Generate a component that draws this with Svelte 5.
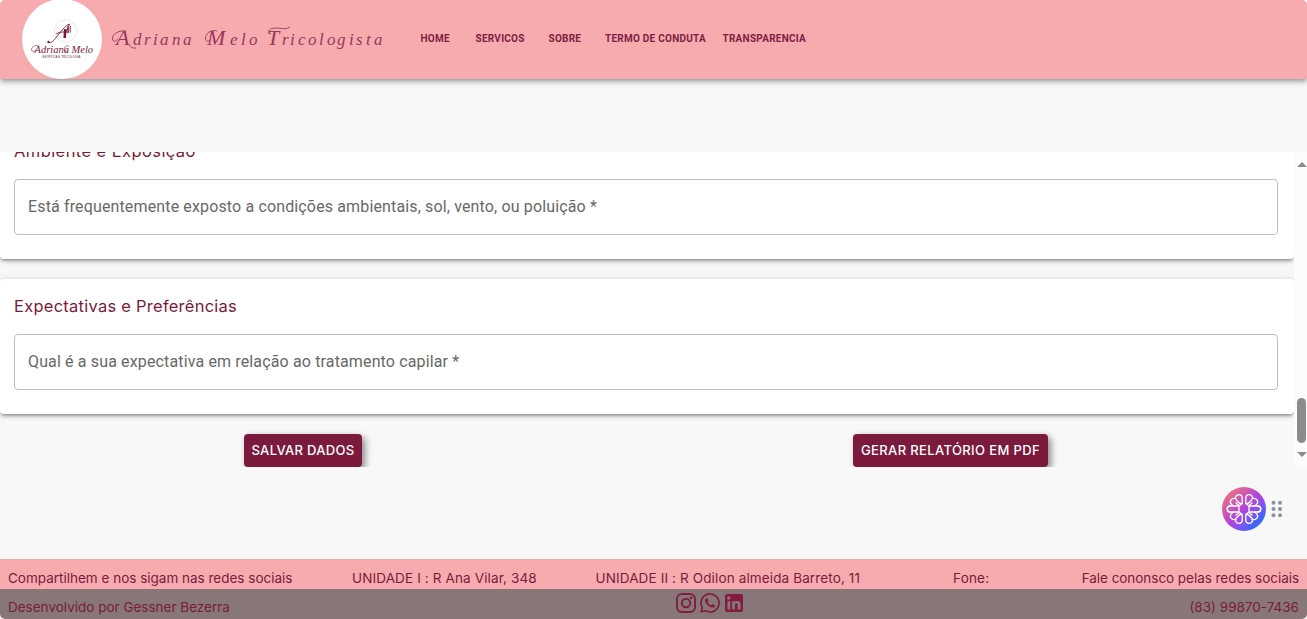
<script>
  const links = [
    { label: 'HOME', width: 55 },
    { label: 'SERVICOS', width: 73 },
    { label: 'SOBRE', width: 56.5 },
    { label: 'TERMO DE CONDUTA', width: 117.5 },
    { label: 'TRANSPARENCIA', width: 90 }
  ];
  const sections = [
    { title: 'Ambiente e Exposição', question: 'Está frequentemente exposto a condições ambientais, sol, vento, ou poluição *', cls: 'first' },
    { title: 'Expectativas e Preferências', question: 'Qual é a sua expectativa em relação ao tratamento capilar *', cls: 'second' }
  ];
  const petals = [0, 1, 2, 3];
</script>

<div class="page">
  <header>
    <svg class="logo" viewBox="0 0 80 80">
      <circle cx="40" cy="40" r="40" fill="#fff" />
      <circle cx="43.5" cy="32" r="11.2" fill="none" stroke="#e8dfe1" stroke-width=".8" />
      <path d="M26.500 43c2 2 5-1 8-5 5-6 8-11 13-13-2 4-4 9-5 14M34 35c3-2 6-2 9-2" fill="none" stroke="#7b1a3c" stroke-width=".9" />
      <path d="M42 30h2.500l-.5 9h-2.600zM45.300 27.500h1.500v6.500h-1.500zM47.700 27h1v6.500h-1z" fill="#7b1a3c" />
      <circle cx="26.500" cy="43" r="1.200" fill="#7b1a3c" />
      <path d="M17 47c-5-2-9 3-7 5 2 1 4 0 4-1M47 47c-4-1-6 3-4 5 1 1 3 0 3-1" fill="none" stroke="#7b1a3c" stroke-width=".6" />
      <text class="script" x="12.500" y="53.500" font-size="10.500">Adriana Melo</text>
      <text class="tag" x="20.500" y="59.300" font-size="3.100">ESTÉTICA E TRICOLOGIA</text>
    </svg>
    <svg class="brand" viewBox="0 0 276 34">
      <g class="swash">
        <path d="M14 8C7 7 0 11 .5 16c.5 3 4 3 5 0" />
        <path d="M17 22c2 2.500 4 3.500 7 3" />
        <path d="M105 8c-6-2-12 3-11.500 8 .5 3 4 3 5 0" />
        <path d="M159 11c-5-1-2-6 5-6 6 0 9 2 14-1" />
      </g>
      <text class="name"><tspan class="cap" x="4" y="22">A</tspan><tspan x="21 32 41 48 60 71" y="22">driana</tspan></text>
      <text class="name"><tspan class="cap" x="95" y="22">M</tspan><tspan x="118 129 137" y="22">elo</tspan></text>
      <text class="name"><tspan class="cap" x="155" y="22">T</tspan><tspan x="170 178 186 196 207 215 225 237 244 254 262" y="22">ricologista</tspan></text>
    </svg>
    <nav>
      {#each links as link}
        <a href="#top" style="width: {link.width}px">{link.label}</a>
      {/each}
    </nav>
  </header>

  <main>
    <div class="content">
      {#each sections as section}
        <section class={section.cls}>
          <h2>{section.title}</h2>
          <div class="field"><span>{section.question}</span></div>
        </section>
      {/each}
      <div class="actions">
        <button class="save"><span>SALVAR DADOS</span></button>
        <button class="report"><span>GERAR RELATÓRIO EM PDF</span></button>
      </div>
    </div>
    <div class="scrollbar">
      <i class="up"></i>
      <i class="thumb"></i>
      <i class="down"></i>
    </div>
  </main>

  <div class="assistant">
    <svg width="44" height="44" viewBox="0 0 44 44">
      <defs>
        <linearGradient id="orb" x1=".12" y1=".12" x2=".88" y2=".88">
          <stop offset="0" stop-color="#ee7080" />
          <stop offset=".5" stop-color="#b244dc" />
          <stop offset=".68" stop-color="#8a50f0" />
          <stop offset=".9" stop-color="#3b68f8" />
        </linearGradient>
      </defs>
      <circle cx="22" cy="22" r="22" fill="url(#orb)" />
      <g fill="none" stroke="#fff" stroke-width="1.300" stroke-linejoin="round">
        {#each petals as p}
          <g transform="translate(22 22) scale({p % 2 ? -1 : 1} {p > 1 ? -1 : 1})">
            <path d="M1.800-5.500V-11c0-4.500 6.700-4.500 6.700-.2 0 2.700-2.500 3.600-4.500 5.700z" />
            <path d="M8.500-10.500c3.800-1 6.600 2.600 4.300 5.700-.7 1-1.800 1.600-3 1.800M5-3.500l3.500-3" />
            <path d="M5 0v-3h8.500c4.300 0 4.300 6 0 6M5-3L1.800-5.500" />
          </g>
        {/each}
      </g>
    </svg>
    <svg class="grip" width="12" height="18" viewBox="0 0 12 18" fill="#8b93a1">
      {#each [2.500, 9] as x}
        {#each [2.800, 9, 15.200] as y}
          <circle cx={x} cy={y} r="2" />
        {/each}
      {/each}
    </svg>
  </div>

  <footer>
    <div class="contacts">
      <span class="share">Compartilhem e nos sigam nas redes sociais</span>
      <span class="unit">UNIDADE I : R Ana Vilar, 348</span>
      <span class="unit">UNIDADE II : R Odilon almeida Barreto, 11</span>
      <span class="phone">Fone:</span>
      <span class="talk">Fale cononsco pelas redes sociais</span>
    </div>
    <div class="credits">
      <span class="dev">Desenvolvido por Gessner Bezerra</span>
      <div class="social">
        <svg viewBox="0 0 20 20" width="20" height="20">
          <g fill="none" stroke="#841b41" stroke-width="1.900"><rect x=".95" y=".95" width="18.100" height="18.100" rx="5" /><circle cx="10" cy="10" r="4.200" /></g>
          <circle cx="15.300" cy="4.700" r="1.300" fill="#841b41" />
        </svg>
        <svg viewBox="2 2 20 20" width="20" height="20" fill="#841b41">
          <path d="M19.050 4.910A9.816 9.816 0 0 0 12.040 2c-5.460 0-9.910 4.450-9.910 9.910 0 1.750.46 3.450 1.320 4.950L2.050 22l5.250-1.380c1.450.79 3.080 1.210 4.740 1.210 5.460 0 9.910-4.450 9.910-9.910 0-2.650-1.030-5.140-2.900-7.010zM12.040 20.150c-1.480 0-2.930-.4-4.200-1.150l-.3-.18-3.120.82.83-3.040-.2-.31a8.264 8.264 0 0 1-1.260-4.380c0-4.540 3.700-8.240 8.240-8.240 2.200 0 4.270.86 5.820 2.420a8.183 8.183 0 0 1 2.410 5.830c.02 4.540-3.680 8.230-8.220 8.230zm4.520-6.160c-.25-.12-1.470-.72-1.690-.81-.23-.08-.39-.12-.56.12-.17.25-.64.81-.78.97-.14.17-.29.19-.54.06-.25-.12-1.050-.39-1.990-1.230-.74-.66-1.230-1.470-1.380-1.720-.14-.25-.02-.38.11-.51.11-.11.25-.29.37-.43s.17-.25.25-.41c.08-.17.04-.31-.02-.43s-.56-1.340-.76-1.840c-.2-.48-.41-.42-.56-.43h-.48c-.17 0-.43.06-.66.31-.22.25-.86.85-.86 2.070 0 1.220.89 2.400 1.010 2.560.12.17 1.750 2.670 4.230 3.740 1.680.73 2.340.65 3.060.55.47-.07 1.470-.6 1.670-1.180.21-.58.21-1.070.14-1.180s-.22-.16-.47-.28z" />
        </svg>
        <svg viewBox="3 3 18 18" width="18" height="18" fill="#841b41">
          <path d="M19 3a2 2 0 0 1 2 2v14a2 2 0 0 1-2 2H5a2 2 0 0 1-2-2V5a2 2 0 0 1 2-2h14m-.5 15.500v-5.300a3.260 3.260 0 0 0-3.260-3.260c-.85 0-1.840.52-2.320 1.300v-1.110h-2.790v8.370h2.790v-4.930c0-.77.62-1.400 1.390-1.400a1.400 1.400 0 0 1 1.400 1.400v4.930h2.790M6.880 8.560a1.680 1.680 0 0 0 1.680-1.680c0-.93-.75-1.690-1.680-1.690a1.690 1.690 0 0 0-1.690 1.690c0 .93.76 1.680 1.690 1.680m1.390 9.940v-8.370H5.500v8.370h2.770z" />
        </svg>
      </div>
      <span class="tel">(83) 99870-7436</span>
    </div>
  </footer>
</div>

<style>
  :global(body) { background: #f8f8f8; overflow: hidden; }
  * { box-sizing: border-box; }
  .page { height: 619px; display: flex; flex-direction: column; background: #f8f8f8; font-family: Inter, sans-serif; color: #7b1a3c; border-radius: 5px; overflow: hidden; }
  header { height: 79px; flex: none; display: flex; align-items: center; padding-left: 22px; background: #f7abaf; box-shadow: 0 2px 4px -1px rgba(0,0,0,.26), 0 4px 5px rgba(0,0,0,.14), 0 1px 8px rgba(0,0,0,.1); }
  .logo { width: 80px; height: 80px; margin-top: -2px; flex: none; overflow: visible; }
  .logo text { fill: #7b1a3c; }
  .script { font-family: "Liberation Serif", serif; font-style: italic; }
  .tag { font-family: "Liberation Sans", sans-serif; }
  .brand { width: 276px; height: 34px; margin-left: 10px; flex: none; overflow: visible; }
  .name { font: italic 17px "Liberation Serif", serif; fill: #99375a; }
  .cap { font-size: 22px; }
  .swash { fill: none; stroke: #99375a; stroke-width: .9; }
  nav { display: flex; margin: -1px 0 0 32.500px; }
  a { flex: none; color: #7f2043; text-decoration: none; font: 700 10px/14px Roboto, sans-serif; letter-spacing: .25px; white-space: nowrap; }
  main { height: 315px; flex: none; margin-top: 73px; display: flex; overflow: hidden; }
  .content { width: 1294px; flex: none; overflow: hidden; }
  section { height: 135px; padding: 14px 16px 24px 14px; background: #fff; border-radius: 4px; box-shadow: 0 3px 3px -2px rgba(0,0,0,.3), 0 2px 4px rgba(0,0,0,.2), 0 1px 8px rgba(0,0,0,.12); }
  .first { margin-top: -28px; }
  .second { margin-top: 20px; }
  h2 { margin: 0; height: 41px; font-size: 16.500px; line-height: 26px; font-weight: 400; letter-spacing: .25px; white-space: nowrap; }
  .first h2 { letter-spacing: .42px; }
  .field { height: 56px; display: flex; align-items: center; padding: 0 13px 2px; border: 1px solid #bfbfbf; border-radius: 4px; font: 400 16px/23px Roboto, sans-serif; letter-spacing: .14px; color: #686868; white-space: nowrap; }
  .actions { display: flex; padding: 20px 0 0 244px; }
  button { height: 33px; padding: 0; border: 0; border-radius: 4px; background: #7b1a3c; color: #fff; font: 500 13px/33px Inter, sans-serif; letter-spacing: .32px; white-space: nowrap; box-shadow: 3px 3px 7px rgba(0,0,0,.45); }
  .save { width: 118px; }
  .report { width: 195px; margin-left: 491px; letter-spacing: .37px; }
  .scrollbar { width: 13px; flex: none; background: #fcfcfc; display: flex; flex-direction: column; align-items: center; padding: 10px 0 0 2px; }
  .up { border: 5px solid transparent; border-top: 0; border-bottom: 5px solid #8b8b8b; }
  .thumb { width: 9px; height: 45px; margin-top: 231px; border-radius: 5px; background: #8b8b8b; }
  .down { margin-top: 9px; border: 5px solid transparent; border-bottom: 0; border-top: 5px solid #8b8b8b; }
  .assistant { height: 44px; margin: 20px 24px 28px auto; display: flex; align-items: center; gap: 5px; }
  footer { height: 60px; flex: none; background: #f7abaf; font-size: 13.500px; color: #7b1a3c; white-space: nowrap; }
  .contacts { height: 30px; display: grid; grid-template-columns: 344px 243.500px 357.500px 1fr auto; padding: 9px 8px 0; line-height: 20px; }
  .unit { letter-spacing: .13px; }
  .talk { letter-spacing: -.04px; }
  .phone { letter-spacing: .2px; }
  .credits { height: 30px; display: grid; grid-template-columns: 1fr auto 1fr; padding: 4px 8px 0; background: #877778; border-radius: 0 0 5px 5px; line-height: 28px; }
  .social { display: flex; align-items: center; gap: 4px; height: 20px; margin-left: 56px; margin-right: -56px; }
  .social svg:last-child { margin-left: 1px; }
  .dev { width: 285px; }
  .tel { text-align: right; }
</style>
